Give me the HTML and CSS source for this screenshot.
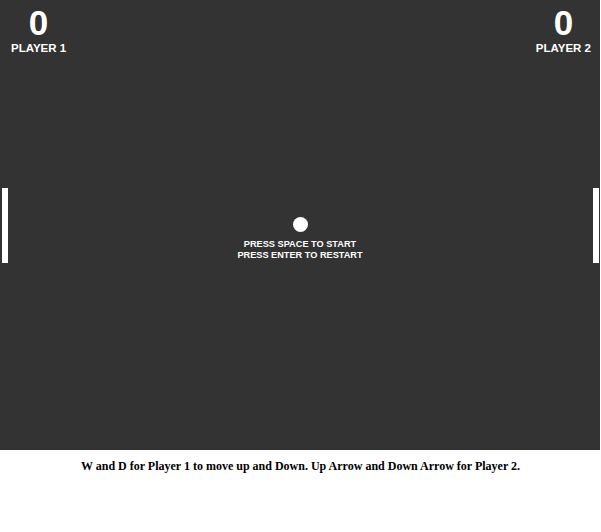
FILE: index.html
```html
<!DOCTYPE html>
<html>
<head>
<meta charset="utf-8">
<link rel="stylesheet" href="styles.css">
</head>
<body>
<div class="game">
  <div class="scores">
    <div class="score">
      <div class="num">0</div>
      <div class="label">PLAYER 1</div>
    </div>
    <div class="score">
      <div class="num">0</div>
      <div class="label">PLAYER 2</div>
    </div>
  </div>
  <div class="paddle left"></div>
  <div class="paddle right"></div>
  <div class="ball"></div>
  <div class="message">
    <div>PRESS SPACE TO START</div>
    <div>PRESS ENTER TO RESTART</div>
  </div>
</div>
<p class="help">W and D for Player 1 to move up and Down. Up Arrow and Down Arrow for Player 2.</p>
</body>
</html>
```
FILE: styles.css
```css
body {
  margin: 0;
  background: #fff;
}
.game {
  position: relative;
  width: 600px;
  height: 450px;
  background: #333333;
  color: #fff;
  font-family: "Liberation Sans", Arial, sans-serif;
  font-weight: bold;
}
.scores {
  display: flex;
  justify-content: space-between;
  padding: 5px 9px 0 11px;
}
.score {
  text-align: center;
}
.num {
  font-size: 35px;
  line-height: 35px;
  margin-bottom: 1px;
}
.label {
  font-size: 11.5px;
  line-height: 14px;
}
.paddle {
  position: absolute;
  top: 188px;
  width: 6px;
  height: 75px;
  background: #fff;
}
.paddle.left { left: 2px; }
.paddle.right { left: 593px; }
.ball {
  position: absolute;
  left: 293px;
  top: 217px;
  width: 15px;
  height: 15px;
  border-radius: 50%;
  background: #fff;
}
.message {
  position: absolute;
  left: 0;
  right: 0;
  top: 239px;
  text-align: center;
  font-size: 9.2px;
  line-height: 11px;
}
.help {
  margin: 9px 0 0;
  text-align: center;
  font-family: "Liberation Serif", "Times New Roman", serif;
  font-weight: bold;
  font-size: 12px;
  color: #000;
}
```
